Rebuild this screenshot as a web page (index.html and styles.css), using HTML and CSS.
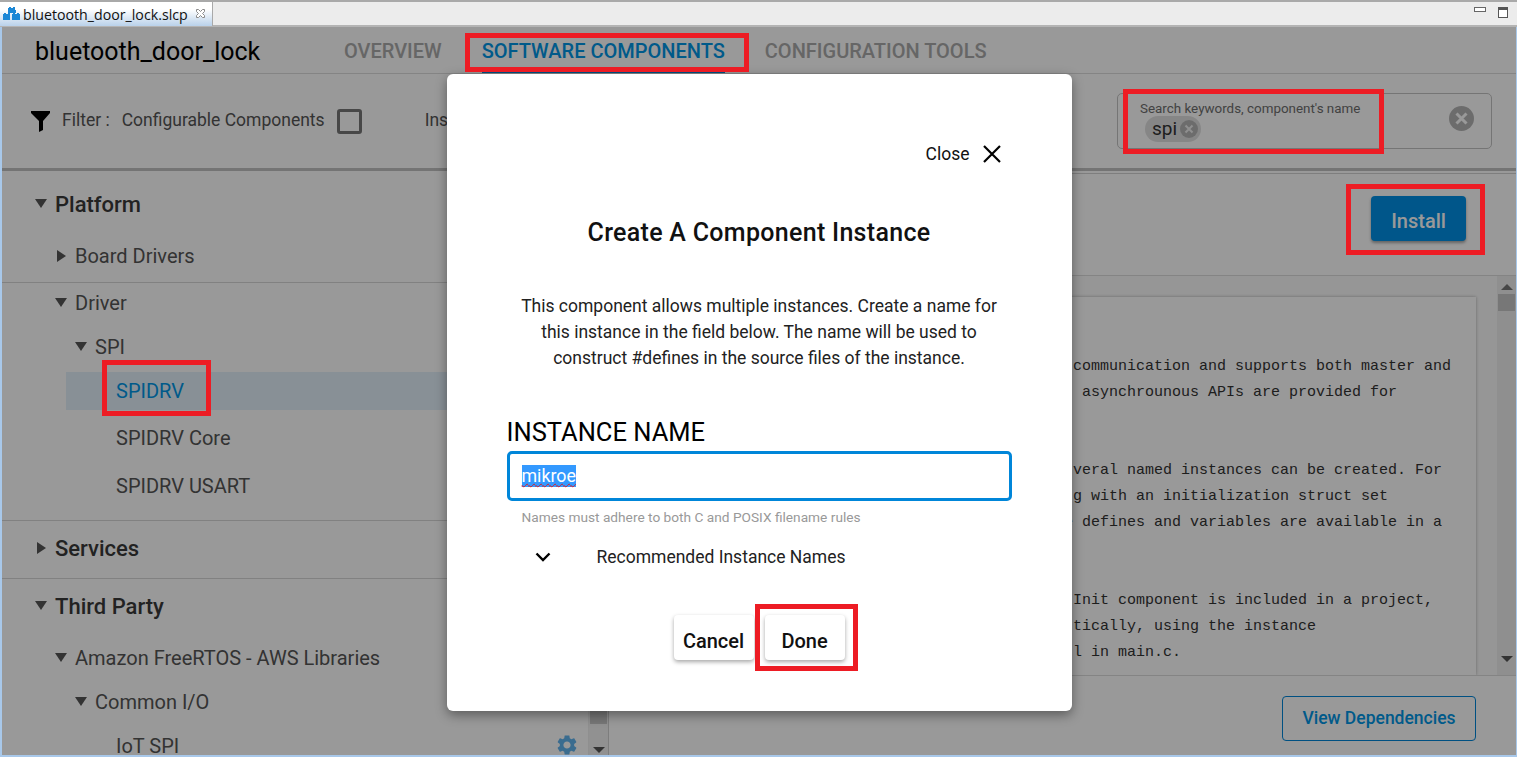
FILE: index.html
```html
<!DOCTYPE html>
<html lang="en">

<head>
  <meta charset="UTF-8" />
  <title>bluetooth_door_lock.slcp</title>

  <link rel="stylesheet" href="styles.css">
</head>

<body>
  <div class="tabbar">
    <div class="file-tab">
      <svg class="file-icon" width="18" height="14" viewBox="0 0 18 14">
        <path fill="#1b87d6" d="M6 0h2v1h2V0h2v3h1V6h-8V1h1zM1 6h2v1h2V6h2v7H0V7h1zM10 6h2v1h2V6h2v1h1v6h-8V7h1z" />
      </svg>
      <span>bluetooth_door_lock.slcp</span>
      <svg class="tab-close" width="11" height="11" viewBox="0 0 11 11">
        <path fill="#fff" stroke="#8a8a8a" d="M1.5 1.5h2l2 2 2-2h2v2l-2 2 2 2v2h-2l-2-2-2 2h-2v-2l2-2-2-2z" />
      </svg>
    </div>
    <div class="win-buttons">
      <span class="win-min"></span>
      <span class="win-max"></span>
    </div>
  </div>

  <div class="app">
    <header class="app-head">
      <div class="project">bluetooth_door_lock</div>
      <nav class="tabs">
        <a class="tab">OVERVIEW</a>
        <a class="tab active">SOFTWARE COMPONENTS</a>
        <a class="tab">CONFIGURATION TOOLS</a>
      </nav>
    </header>

    <div class="filters">
      <svg class="funnel" width="19" height="21" viewBox="0 0 19 21">
        <path fill="#000" d="M0 0h19v2l-7 8v9l-4 2V10L0 2z" />
      </svg>
      <span class="filter-label">Filter :</span>
      <span class="filter-name">Configurable Components</span>
      <span class="checkbox"></span>
      <span class="filter-name installed">Installed Components</span>
      <div class="search">
        <div class="search-text">
          <div class="search-label">Search keywords, component's name</div>
          <span class="chip">spi
            <svg class="chip-x" width="18" height="18" viewBox="0 0 18 18">
              <circle cx="9" cy="9" r="9" fill="#b5b5b5" />
              <path stroke="#eee" stroke-width="2" d="M5.5 5.5l7 7M12.500 5.500l-7 7" />
            </svg>
          </span>
        </div>
        <svg class="search-clear" width="25" height="25" viewBox="0 0 25 25">
          <circle cx="12.500" cy="12.500" r="12.500" fill="#b5b5b5" />
          <path stroke="#fff" stroke-width="3" d="M7.500 7.500l10 10M17.500 7.500l-10 10" />
        </svg>
      </div>
    </div>

    <div class="main">
      <aside class="sidebar">
        <div class="tree">
          <section class="tree-group">
            <div class="head"><i class="down"></i>Platform</div>
            <div class="row lvl1"><i class="right"></i>Board Drivers</div>
          </section>
          <section class="tree-group driver-group">
            <div class="row lvl1 driver"><i class="down"></i>Driver</div>
            <div class="row lvl2"><i class="down"></i>SPI</div>
            <div class="leaf selected">SPIDRV</div>
            <div class="leaf">SPIDRV Core</div>
            <div class="leaf">SPIDRV USART</div>
          </section>
          <section class="tree-group">
            <div class="head"><i class="right"></i>Services</div>
          </section>
          <section class="tree-group">
            <div class="head"><i class="down"></i>Third Party</div>
            <div class="row lvl1"><i class="down"></i>Amazon FreeRTOS - AWS Libraries</div>
            <div class="row lvl2"><i class="down"></i>Common I/O</div>
            <div class="leaf iot">IoT SPI
              <svg class="gear" width="24" height="24" viewBox="0 0 24 24">
                <path fill="#62b4ee" d="M19.14 12.94c.04-.3.06-.61.06-.94 0-.32-.02-.64-.07-.94l2.03-1.58c.18-.14.23-.41.12-.61l-1.92-3.32c-.12-.22-.37-.29-.59-.22l-2.39.96c-.5-.38-1.03-.7-1.62-.94l-.36-2.54c-.04-.24-.24-.41-.48-.41h-3.84c-.24 0-.43.17-.47.41l-.36 2.54c-.59.24-1.13.57-1.62.94l-2.39-.96c-.22-.08-.47 0-.59.22L2.74 8.87c-.12.21-.08.47.12.61l2.03 1.58c-.05.3-.09.63-.09.94s.02.64.07.94l-2.03 1.58c-.18.14-.23.41-.12.61l1.92 3.32c.12.22.37.29.59.22l2.39-.96c.5.38 1.03.7 1.62.94l.36 2.54c.05.24.24.41.48.41h3.84c.24 0 .44-.17.47-.41l.36-2.54c.59-.24 1.13-.56 1.62-.94l2.39.96c.22.08.47 0 .59-.22l1.92-3.32c.12-.22.07-.47-.12-.61l-2.01-1.58zM12 15.6c-1.98 0-3.6-1.62-3.6-3.6s1.62-3.6 3.6-3.6 3.6 1.62 3.6 3.6-1.62 3.6-3.6 3.6z" />
              </svg>
            </div>
          </section>
        </div>
        <div class="side-scroll">
          <span class="thumb"></span>
          <i class="down small"></i>
        </div>
      </aside>

      <section class="detail">
        <div class="detail-head">
          <button class="install">Install</button>
        </div>
        <div class="doc-area">
          <pre class="doc"> communication and supports both master and
. asynchrounous APIs are provided for


 veral named instances can be created. For
 g with an initialization struct set
e defines and variables are available in a


 Init component is included in a project,
 tically, using the instance
 l in main.c.</pre>
          <div class="doc-scroll">
            <i class="up small"></i>
            <span class="doc-thumb"></span>
            <i class="down small"></i>
          </div>
        </div>
        <div class="detail-foot">
          <button class="deps">View Dependencies</button>
        </div>
      </section>
    </div>

    <div class="overlay">
      <div class="modal">
        <div class="close-line">
          <span>Close</span>
          <svg width="18" height="18" viewBox="0 0 18 18">
            <path stroke="#000" stroke-width="2.200" d="M1 1l16 16M17 1L1 17" />
          </svg>
        </div>
        <h2 class="modal-title">Create A Component Instance</h2>
        <p class="modal-text">This component allows multiple instances. Create a name for<br>this instance in the field below. The name will be used to<br>construct #defines in the source files of the instance.</p>
        <div class="field-label">INSTANCE NAME</div>
        <div class="field"><span class="field-value">mikroe</span></div>
        <div class="hint">Names must adhere to both C and POSIX filename rules</div>
        <div class="recommend">
          <svg width="16" height="10" viewBox="0 0 16 10">
            <path fill="none" stroke="#000" stroke-width="2.400" d="M1.500 1.500L8 8l6.500-6.500" />
          </svg>
          <span>Recommended Instance Names</span>
        </div>
        <div class="modal-buttons">
          <button class="plain">Cancel</button>
          <button class="plain">Done</button>
        </div>
      </div>
    </div>

    <span class="mark mark-tabs"></span>
    <span class="mark mark-search"></span>
    <span class="mark mark-install"></span>
    <span class="mark mark-spidrv"></span>
    <span class="mark mark-done"></span>
  </div>
</body>

</html>
```

FILE: styles.css
```css
html,
body {
  height: 100%;
}

body {
  margin: 0;
  overflow: hidden;
  font-family: Roboto, sans-serif;
  background-color: #fff;
  color: #555;
}

button {
  font-family: Roboto, sans-serif;
  cursor: pointer;
}

/* ide tab strip */
.tabbar {
  height: 27px;
  box-sizing: border-box;
  display: flex;
  justify-content: space-between;
  background-color: #ececec;
  border-top: 2px solid #a9a9a9;
  border-bottom: 2px solid #b4b4b4;
}

.file-tab {
  width: 213px;
  height: 24px;
  box-sizing: border-box;
  display: flex;
  align-items: center;
  padding-left: 3px;
  background: linear-gradient(#fff, #fff 30%, #b9d1ea);
  border-right: 1px solid #a9a9a9;
  font-family: "Open Sans", sans-serif;
  font-size: 14.2px;
  color: #111;
}

.file-icon {
  margin-right: 2px;
  flex: none;
}

.tab-close {
  margin-left: 7px;
  margin-top: -2px;
}

.win-buttons {
  display: flex;
  padding: 5px 9px 0 0;
}

.win-min {
  width: 10px;
  height: 3px;
  border: 1px solid #666;
  background-color: #fff;
  margin-right: 12px;
}

.win-max {
  width: 8px;
  height: 7px;
  border: 1px solid #555;
  border-top-width: 3px;
  background-color: #fff;
}

/* studio app */
.app {
  position: relative;
  height: 730px;
  box-sizing: border-box;
  display: flex;
  flex-direction: column;
  overflow: hidden;
  background-color: #fff;
  border-left: 2px solid #a8c8ea;
  border-right: 1px solid #a8c8ea;
  border-bottom: 2px solid #a8c8ea;
}

.app-head {
  height: 47px;
  flex: none;
  box-sizing: border-box;
  display: flex;
  border-bottom: 1px solid #ddd;
  padding-left: 33px;
}

.project {
  width: 309px;
  font-size: 25px;
  font-weight: 400;
  line-height: 49px;
  color: #000;
}

.tabs {
  display: flex;
  gap: 40px;
}

.tab {
  font-size: 20px;
  font-weight: 500;
  line-height: 48px;
  color: #aaa;
}

.tab.active {
  color: #0096e6;
  border-bottom: 2px solid #0086d9;
  box-sizing: border-box;
  height: 46px;
}

.filters {
  height: 97px;
  flex: none;
  box-sizing: border-box;
  display: flex;
  align-items: center;
  padding: 0 24px 0 29px;
  border-bottom: 3px solid #c2c2c2;
  font-size: 17.5px;
}

.filter-label,
.filter-name {
  position: relative;
  top: -1px;
}

.funnel {
  margin-right: 12px;
}

.filter-label {
  margin-right: 12px;
}

.checkbox {
  width: 25px;
  height: 25px;
  box-sizing: border-box;
  border: 3px solid #777;
  border-radius: 3px;
  margin: 0 63px 0 12px;
}

.search {
  margin-left: auto;
  width: 375px;
  height: 56px;
  box-sizing: border-box;
  display: flex;
  align-items: center;
  justify-content: space-between;
  padding: 0 17px 0 22px;
  border: 1px solid #c4c4c4;
  border-radius: 5px;
}

.search-label {
  font-size: 13.4px;
  line-height: 14px;
  margin-top: 1px;
  color: #6e6e6e;
}

.chip {
  width: 56px;
  height: 26px;
  box-sizing: border-box;
  display: flex;
  align-items: center;
  margin-left: 5px;
  padding-left: 7px;
  border-radius: 13px;
  background-color: #e0e0e0;
  font-size: 19px;
  color: #333;
}

.chip-x {
  margin-left: 3px;
}

.search-clear {
  margin-top: -6px;
}

.main {
  flex: 1;
  min-height: 0;
  display: grid;
  grid-template-columns: 607px 1fr;
}

/* component tree */
.sidebar {
  display: flex;
  min-height: 0;
  overflow: hidden;
  border-right: 1px solid #d0d0d0;
}

.tree {
  flex: 1;
  padding-top: 6px;
  font-size: 20px;
}

.tree-group {
  border-bottom: 1px solid #d8d8d8;
}

.tree-group:last-child {
  border-bottom: 0;
}

.head {
  height: 54px;
  margin-bottom: 3px;
  display: flex;
  align-items: center;
  padding-left: 33px;
  font-size: 22px;
  font-weight: 500;
  color: #3a3a3a;
}

.row {
  height: 44px;
  display: flex;
  align-items: center;
  color: #555;
}

.lvl1 {
  padding-left: 53px;
}

.lvl2 {
  padding-left: 73px;
}

.tree-group:first-child .row {
  margin-bottom: 4px;
}

.driver {
  height: 40px;
  margin-bottom: 2px;
}

.driver-group {
  padding-bottom: 5px;
}

.leaf {
  height: 38px;
  display: flex;
  align-items: center;
  margin: 0 0 10px 64px;
  padding-left: 50px;
  color: #555;
}

.selected {
  margin-top: 3px;
  margin-bottom: 9px;
  background-color: #e3f1fb;
  color: #0096e6;
}

.iot {
  height: 18px;
  margin: 13px 0 0 64px;
  justify-content: space-between;
  padding-right: 9px;
}

.gear {
  margin-top: -3px;
}

i.down,
i.right,
i.up {
  width: 20px;
  flex: none;
  display: block;
  position: relative;
  height: 10px;
}

i.down::before,
i.right::before,
i.up::before {
  content: "";
  position: absolute;
  left: 0;
  top: 0;
  border-style: solid;
  border-color: transparent;
}

i.down::before {
  border-width: 9px 6px 0 6px;
  border-top-color: #555;
}

i.right::before {
  left: 2px;
  top: -1px;
  border-width: 6px 0 6px 9px;
  border-left-color: #555;
}

i.up.small::before,
i.down.small::before {
  left: 50%;
  margin-left: -6px;
  border-width: 0 6px 6px 6px;
  border-bottom-color: #777;
}

i.down.small::before {
  border-width: 6px 6px 0 6px;
  border-top-color: #555;
}

.side-scroll {
  width: 20px;
  flex: none;
  display: flex;
  flex-direction: column;
  align-items: center;
  background-color: #f2f2f2;
  border-left: 1px solid #eee;
  box-sizing: border-box;
  justify-content: flex-end;
}

.side-scroll i.small {
  height: 6px;
  margin-bottom: 2px;
}

.thumb {
  width: 17px;
  height: 300px;
  background-color: #c6c6c6;
  margin-bottom: 23px;
}

/* right panel */
.detail {
  display: flex;
  flex-direction: column;
  min-height: 0;
  margin-top: 2px;
}

.detail-head {
  height: 103px;
  flex: none;
  box-sizing: border-box;
  display: flex;
  justify-content: flex-end;
  align-items: flex-start;
  padding: 22px 50px 0 0;
  border-top: 1px solid #d2d2d2;
  border-bottom: 1px solid #ddd;
}

.install {
  width: 95px;
  height: 45px;
  padding: 4px 0 0;
  border: 0;
  border-radius: 4px;
  background-color: #0090e6;
  box-shadow: 0 2px 3px rgba(0, 0, 0, 0.35);
  color: #fff;
  font-size: 20px;
  font-weight: 500;
}

.doc-area {
  flex: 1;
  min-height: 0;
  display: flex;
  padding-left: 20px;
  overflow: hidden;
  background-color: #fafafa;
}

.doc {
  flex: 1;
  margin: 21px 21px 0 0;
  padding: 57px 0 0 435px;
  background-color: #fff;
  box-shadow: 0 0 3px rgba(0, 0, 0, 0.3);
  font-family: "Liberation Mono", monospace;
  font-size: 15px;
  line-height: 26px;
  color: #333;
}

.doc-scroll {
  width: 19px;
  flex: none;
  display: flex;
  flex-direction: column;
  align-items: center;
  padding-top: 8px;
  box-sizing: border-box;
  background-color: #efefef;
}

.doc-scroll i.small {
  height: 6px;
}

.doc-thumb {
  width: 17px;
  height: 17px;
  margin: 4px 0 345px;
  background-color: #c6c6c6;
}

.detail-foot {
  height: 80px;
  flex: none;
  box-sizing: border-box;
  display: flex;
  justify-content: flex-end;
  padding: 20px 40px 0 0;
  border-top: 1px solid #dcdcdc;
}

.deps {
  width: 194px;
  height: 45px;
  padding: 0 0 2px;
  background-color: #fff;
  border: 1px solid #0086d9;
  border-radius: 4px;
  color: #0096e6;
  font-size: 17.500px;
  font-weight: 500;
}

/* dialog */
.overlay {
  position: absolute;
  inset: 0;
  display: flex;
  justify-content: center;
  align-items: flex-start;
  padding-top: 47px;
  background-color: rgba(0, 0, 0, 0.4);
}

.modal {
  width: 625px;
  height: 637px;
  box-sizing: border-box;
  padding: 0 60px;
  background-color: #fff;
  border-radius: 6px;
  box-shadow: 0 4px 12px rgba(0, 0, 0, 0.4);
  color: #111;
}

.close-line {
  display: flex;
  justify-content: flex-end;
  align-items: center;
  gap: 13px;
  padding: 70px 11px 0 0;
  font-size: 17.500px;
}

.modal-title {
  margin: 53px 0 0;
  text-align: center;
  font-size: 25px;
  font-weight: 500;
  line-height: 32px;
  letter-spacing: 0.3px;
}

.modal-text {
  margin: 44px 0 0;
  text-align: center;
  font-size: 17.500px;
  line-height: 26px;
  color: #222;
}

.field-label {
  margin-top: 46px;
  font-size: 25.500px;
  line-height: 30px;
  color: #000;
}

.field {
  height: 50px;
  box-sizing: border-box;
  margin-top: 4px;
  padding-left: 12px;
  display: flex;
  align-items: center;
  border: 3px solid #0086d9;
  border-radius: 5px;
}

.field-value {
  font-size: 17.800px;
  line-height: 22px;
  background-color: #3399ff;
  color: #fff;
  text-decoration: underline wavy #e01b24 1px;
  text-underline-offset: 1px;
}

.hint {
  margin: 7px 0 0 15px;
  font-size: 13.700px;
  line-height: 18px;
  color: #999;
}

.recommend {
  display: flex;
  align-items: center;
  margin-top: 19px;
  padding-left: 28px;
  font-size: 17.500px;
  line-height: 24px;
  color: #222;
}

.recommend span {
  margin-left: 46px;
}

.modal-buttons {
  display: flex;
  justify-content: center;
  gap: 11px;
  margin-top: 46px;
}

.plain {
  width: 80px;
  height: 45px;
  padding: 6px 0 0;
  border: 0;
  border-radius: 4px;
  background-color: #fff;
  box-shadow: 0 2px 4px rgba(0, 0, 0, 0.35);
  color: #111;
  font-size: 20px;
  font-weight: 500;
}

/* red annotation boxes drawn on top of the screenshot */
.mark {
  position: absolute;
  box-sizing: border-box;
  border: 5px solid #ed1c24;
}

.mark-tabs {
  left: 463px;
  top: 6px;
  width: 284px;
  height: 39px;
}

.mark-search {
  left: 1121px;
  top: 62px;
  width: 261px;
  height: 65px;
}

.mark-install {
  left: 1344px;
  top: 157px;
  width: 139px;
  height: 71px;
}

.mark-spidrv {
  left: 100px;
  top: 333px;
  width: 109px;
  height: 56px;
}

.mark-done {
  left: 753px;
  top: 577px;
  width: 103px;
  height: 67px;
}
```
